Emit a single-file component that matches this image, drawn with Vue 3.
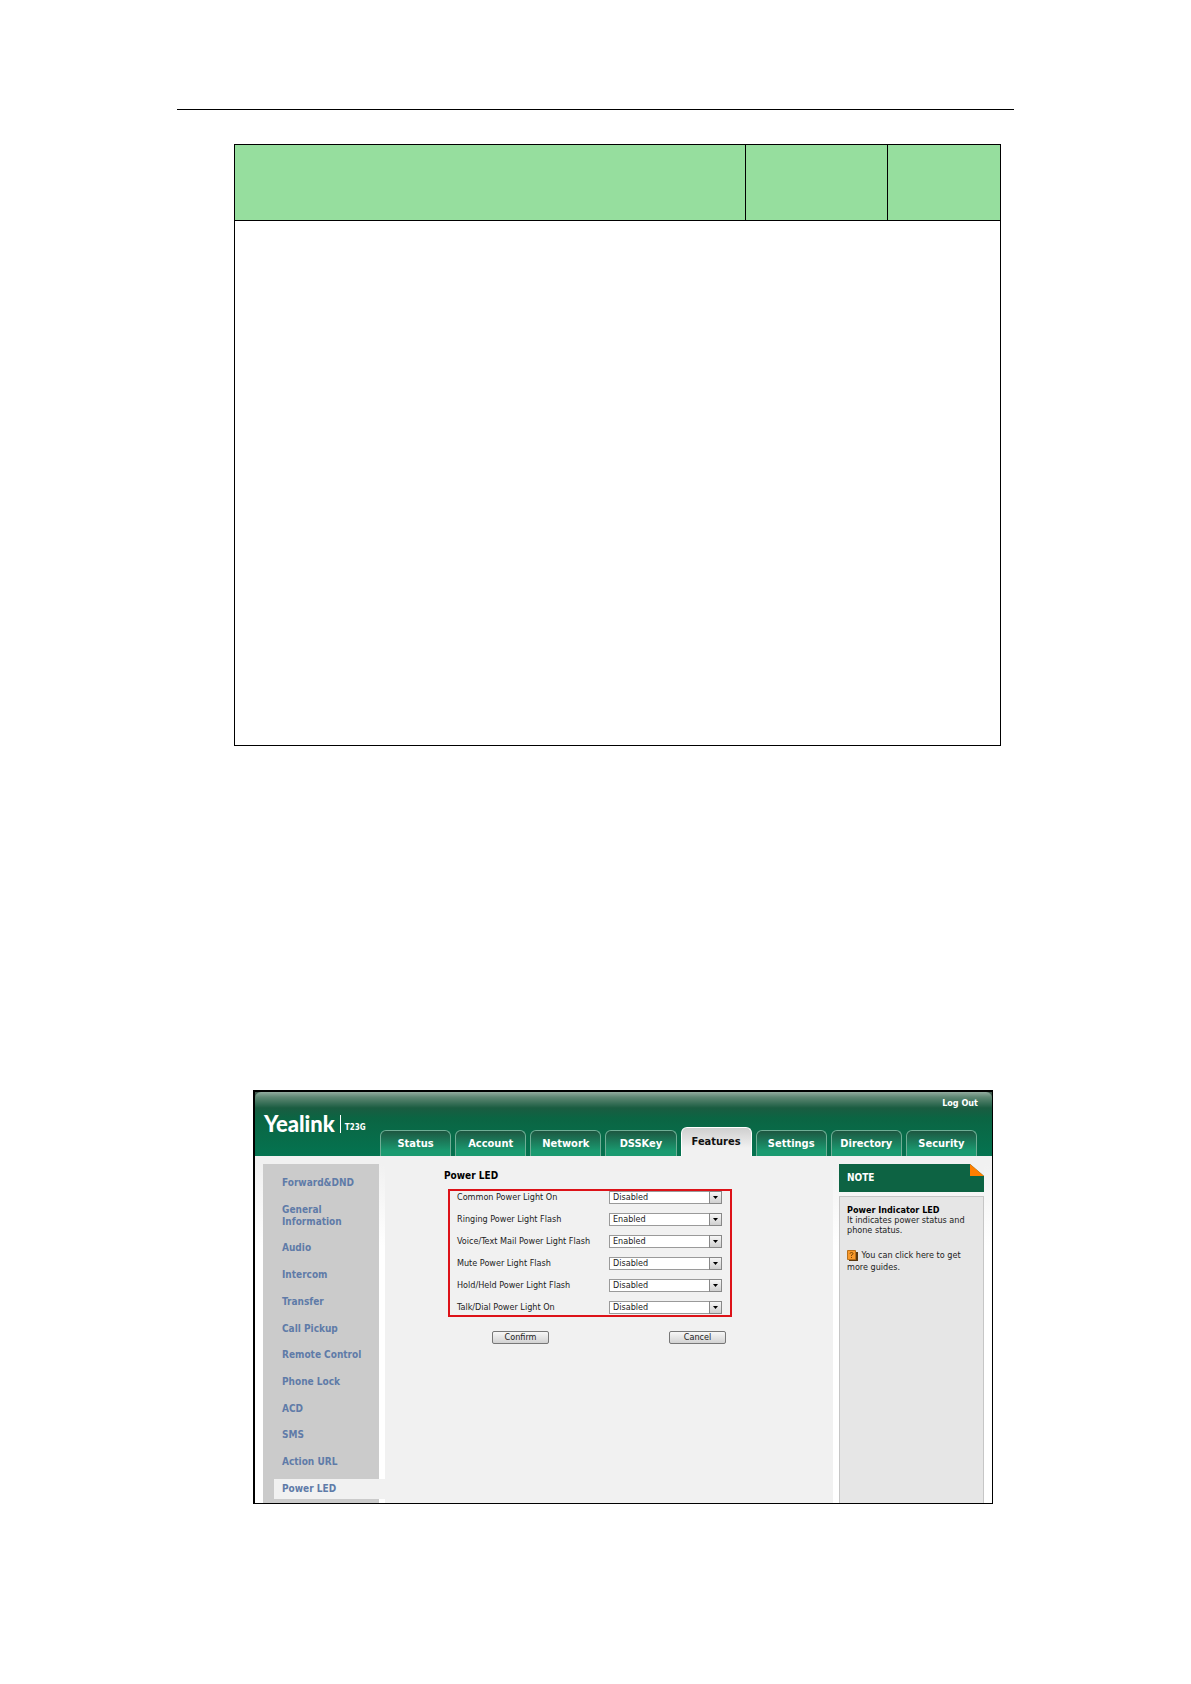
<script setup>
import { ref } from 'vue'

const tabs = ['Status', 'Account', 'Network', 'DSSKey', 'Features', 'Settings', 'Directory', 'Security']
const activeTab = ref('Features')

const menu = [
    'Forward&DND', 'General Information', 'Audio', 'Intercom', 'Transfer', 'Call Pickup',
    'Remote Control', 'Phone Lock', 'ACD', 'SMS', 'Action URL', 'Power LED'
]
const activeMenu = ref('Power LED')

const defaults = () => [
    { id: 'common', label: 'Common Power Light On', value: 'Disabled' },
    { id: 'ringing', label: 'Ringing Power Light Flash', value: 'Enabled' },
    { id: 'mail', label: 'Voice/Text Mail Power Light Flash', value: 'Enabled' },
    { id: 'mute', label: 'Mute Power Light Flash', value: 'Disabled' },
    { id: 'hold', label: 'Hold/Held Power Light Flash', value: 'Disabled' },
    { id: 'talk', label: 'Talk/Dial Power Light On', value: 'Disabled' }
]
const rows = ref(defaults())

const cancel = () => {
    rows.value = defaults()
}
</script>

<template>
    <div class="page">
        <hr class="rule" />
        <table class="params">
            <colgroup>
                <col class="colName" />
                <col class="colValues" />
                <col class="colDefault" />
            </colgroup>
            <thead>
                <tr><th></th><th></th><th></th></tr>
            </thead>
            <tbody>
                <tr><td colspan="3"></td></tr>
            </tbody>
        </table>

        <div class="shot">
            <header class="top">
                <a class="logout" href="#">Log Out</a>
                <div class="topRow">
                    <div class="brand">
                        <span class="logo">Yealink</span>
                        <span class="model">T23G</span>
                    </div>
                    <nav class="tabs">
                        <a
                            v-for="tab in tabs"
                            :key="tab"
                            href="#"
                            class="tab"
                            :class="{ tabActive: tab === activeTab }"
                            @click.prevent="activeTab = tab"
                        >{{ tab }}</a>
                    </nav>
                </div>
            </header>

            <div class="body">
                <nav class="side">
                    <a
                        v-for="item in menu"
                        :key="item"
                        href="#"
                        class="sideItem"
                        :class="{ sideActive: item === activeMenu }"
                        @click.prevent="activeMenu = item"
                    ><span>{{ item }}</span></a>
                </nav>

                <form class="main" @submit.prevent>
                    <h2 class="title">Power LED</h2>
                    <div class="fields">
                        <div v-for="row in rows" :key="row.id" class="field">
                            <label :for="row.id">{{ row.label }}</label>
                            <div class="selectBox">
                                <select :id="row.id" v-model="row.value">
                                    <option>Disabled</option>
                                    <option>Enabled</option>
                                </select>
                                <span class="arrow">
                                    <svg width="5" height="3" viewBox="0 0 5 3"><path d="M0 0h5L2.5 3z" fill="#000" /></svg>
                                </span>
                            </div>
                        </div>
                    </div>
                    <div class="actions">
                        <button type="submit">Confirm</button>
                        <button type="button" @click="cancel">Cancel</button>
                    </div>
                </form>

                <aside class="note">
                    <div class="noteHead">
                        NOTE
                        <svg class="fold" width="14" height="12" viewBox="0 0 14 12">
                            <path d="M0 0h14v12z" fill="#f1f1f1" />
                            <path d="M0 0v12h14z" fill="#ff7f00" />
                        </svg>
                    </div>
                    <div class="noteBody">
                        <strong>Power Indicator LED</strong>
                        <p>It indicates power status and phone status.</p>
                        <a class="guide" href="#">
                            <svg width="11" height="11" viewBox="0 0 11 11">
                                <path d="M2 2h9v9H2z" fill="#5a3a12" />
                                <path d="M.5.5h8v9h-8z" fill="#f99a2c" stroke="#b8701c" />
                                <path d="M3 3.7q0-1.2 1.5-1.2t1.5 1.2q0 .8-1.5 1.4v.9M4.5 7v1" fill="none" stroke="#6b3d00" stroke-width=".9" />
                            </svg>
                            You can click here to get more guides.</a>
                    </div>
                </aside>
            </div>
        </div>
    </div>
</template>

<style>
body{
    margin: 0;
    background: #fff;
}
</style>

<style scoped>
.page{
    padding: 109px 177px 180px;
    font-family: "DejaVu Sans Condensed", "DejaVu Sans", sans-serif;
    font-size: 9px;
    color: #222;
}
a{
    text-decoration: none;
}
.rule{
    height: 1px;
    margin: 0;
    border: 0;
    background: #000;
}
.params{
    width: calc(100% - 70px);
    margin: 34px 13px 344px 57px;
    table-layout: fixed;
    border-collapse: collapse;
}
.params th, .params td{
    padding: 0;
    border: 1px solid #000;
}
.params th{
    height: 75px;
    background: #96de9e;
}
.params td{
    height: 524px;
}
.colValues{
    width: 142px;
}
.colDefault{
    width: 113px;
}
.shot{
    margin: 0 21px 0 76px;
    border: 1px solid #000;
    border-width: 2px 1px 1px 2px;
    background: #3d5a4c;
}
.top{
    display: flex;
    flex-direction: column;
    justify-content: space-between;
    min-height: 64px;
    border-radius: 6px 6px 0 0;
    background: linear-gradient(#93ac9f 0, #5f8874 5px, #1a5c41 16px, #0b6543 26px, #047350 64px);
}
.logout{
    align-self: flex-end;
    margin: 5px 14px 0 0;
    line-height: 12px;
    font-weight: bold;
    color: #fff;
}
.topRow{
    display: flex;
    align-items: flex-end;
}
.brand{
    display: flex;
    align-items: flex-end;
    box-sizing: border-box;
    width: 125px;
    padding: 0 0 23px 9px;
    color: #fff;
}
.logo{
    padding-right: 5px;
    border-right: 1px solid #fff;
    font-family: Lato, sans-serif;
    font-size: 22px;
    font-weight: 900;
    line-height: 18px;
}
.model{
    padding-left: 4px;
    font-size: 8px;
    font-weight: bold;
    line-height: 10px;
}
.tabs{
    flex: 1;
    display: flex;
    align-items: flex-end;
    gap: 4px;
    padding-right: 15px;
}
.tab{
    flex: 1 1 0;
    box-sizing: border-box;
    height: 26px;
    border: 1px solid #6fae95;
    border-bottom: 0;
    border-radius: 6px 6px 0 0;
    background: linear-gradient(#1d5741, #1a9a70 20px);
    font-size: 11px;
    font-weight: bold;
    line-height: 25px;
    text-align: center;
    color: #fff;
}
.tabActive{
    height: 29px;
    border-color: #fff;
    background: linear-gradient(#cfcfcf, #f1f1f1 20px);
    line-height: 28px;
    color: #111;
}
.body{
    display: flex;
    min-height: 347px;
    box-sizing: border-box;
    padding: 8px 8px 0;
    background: linear-gradient(#f1f1f1 8px, #fff 90px);
}
.side{
    display: flex;
    flex-direction: column;
    justify-content: space-between;
    box-sizing: border-box;
    width: 116px;
    padding: 9px 0 4px 11px;
    background: #cbcbcb;
}
.sideItem{
    padding: 4px 8px;
    font-size: 10px;
    font-weight: bold;
    line-height: 12px;
    color: #5f7ba8;
}
.sideItem span{
    display: block;
    max-width: 85px;
}
.sideActive{
    margin-right: -6px;
    background: #f1f1f1;
}
.main{
    flex: 1;
    margin: 0 6px;
    padding-left: 59px;
    background: #f1f1f1;
}
.title{
    margin: 6px 0 7px;
    font-size: 10px;
    line-height: 12px;
    color: #000;
}
.fields{
    display: flex;
    flex-direction: column;
    gap: 9px;
    box-sizing: border-box;
    width: 284px;
    margin-left: 4px;
    padding: 0 8px 1px 7px;
    border: 2px solid #dd1218;
}
.field{
    display: flex;
    justify-content: space-between;
    line-height: 13px;
}
.selectBox{
    position: relative;
    width: 113px;
    height: 13px;
}
select{
    appearance: none;
    display: block;
    width: 100%;
    height: 13px;
    margin: 0;
    padding: 0 14px 0 3px;
    border: 1px solid #9a9a9a;
    border-radius: 0;
    background: #fff;
    font: inherit;
    line-height: 11px;
    color: #222;
}
.arrow{
    position: absolute;
    top: 0;
    right: 0;
    display: flex;
    align-items: center;
    justify-content: center;
    box-sizing: border-box;
    width: 13px;
    height: 13px;
    border: 1px solid #888;
    background: linear-gradient(#f6f6f6, #d0d0d0);
    pointer-events: none;
}
.actions{
    display: flex;
    gap: 120px;
    margin: 14px 0 0 48px;
}
button{
    width: 57px;
    height: 13px;
    padding: 0;
    border: 1px solid #777;
    border-radius: 2px;
    background: linear-gradient(#f7f7f7, #d2d2d2);
    font: inherit;
    line-height: 11px;
    color: #222;
}
.note{
    display: flex;
    flex-direction: column;
    gap: 4px;
    width: 145px;
}
.noteHead{
    position: relative;
    padding-left: 8px;
    background: #0d6343;
    font-size: 10px;
    font-weight: bold;
    line-height: 28px;
    color: #fff;
}
.fold{
    position: absolute;
    top: 0;
    right: 0;
}
.noteBody{
    flex: 1;
    padding: 8px 12px 0 7px;
    border: 1px solid #c6c6c6;
    border-bottom: 0;
    background: #e6e6e6;
    line-height: 10px;
}
.noteBody strong{
    color: #000;
}
.noteBody p{
    margin: 0 0 14px;
}
.guide{
    display: block;
    line-height: 12px;
    color: #222;
}
.guide svg{
    margin-right: 1px;
    vertical-align: middle;
}
</style>
